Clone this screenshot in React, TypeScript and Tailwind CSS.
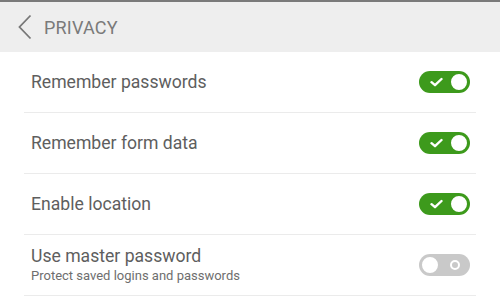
import { useState } from 'react'

type Item = { title: string; subtitle?: string; on: boolean }

const initial: Item[] = [
    { title: 'Remember passwords', on: true },
    { title: 'Remember form data', on: true },
    { title: 'Enable location', on: true },
    { title: 'Use master password', subtitle: 'Protect saved logins and passwords', on: false },
]

const Toggle = ({ on, onClick }: { on: boolean; onClick: () => void }) => (
    <button
        onClick={onClick}
        className={`relative flex h-[22px] w-[51px] items-center rounded-full ${on ? 'bg-[#3d9a1c]' : 'bg-[#c9c9c9]'}`}
    >
        {on ? (
            <>
                <svg className="absolute left-[11px] top-[6px]" width="13" height="10" viewBox="0 0 13 10">
                    <path d="M1.5 5.2 L5 8.2 L11.5 2" fill="none" stroke="#fff" strokeWidth="2.4" strokeLinecap="round" strokeLinejoin="round" />
                </svg>
                <span className="absolute right-[1px] top-[1px] h-[20px] w-[20px] rounded-full border-2 border-[#3d9a1c] bg-white" />
            </>
        ) : (
            <>
                <span className="absolute left-[1px] top-[1px] h-[20px] w-[20px] rounded-full border-2 border-[#c9c9c9] bg-white" />
                <span className="absolute right-[10px] top-[6px] h-[10px] w-[10px] rounded-full border-[2.5px] border-white" />
            </>
        )}
    </button>
)

export default function App() {
    const [items, setItems] = useState(initial)

    const flip = (i: number) =>
        setItems(items.map((it, j) => (j === i ? { ...it, on: !it.on } : it)))

    return (
        <div className="h-[301px] w-[500px] overflow-hidden bg-white" style={{ fontFamily: 'Roboto, "Noto Sans", sans-serif' }}>
            <div className="h-[2px] bg-[#7a7a7a]" />
            <div className="flex h-[50px] items-center bg-[#eeeeee] pl-[17px]">
                <svg width="16" height="26" viewBox="0 0 16 26">
                    <path d="M13.5 1.5 L2.5 13 L13.5 24.5" fill="none" stroke="#777" strokeWidth="1.8" strokeLinejoin="miter" />
                </svg>
                <span className="ml-[11px] text-[18px] tracking-[0.2px] text-[#7a7a7a]">PRIVACY</span>
            </div>
            <div className="px-6">
                {items.map((it, i) => (
                    <div key={it.title} className="flex h-[61px] items-center justify-between border-b border-[#ebebeb] pl-[7px] pr-[6px]">
                        <div className="flex flex-col">
                            <span className="text-[17.6px] leading-[22px] text-[#5e5e5e]">{it.title}</span>
                            {it.subtitle && (
                                <span className="text-[13px] leading-[18px] text-[#6e6e6e]">{it.subtitle}</span>
                            )}
                        </div>
                        <Toggle on={it.on} onClick={() => flip(i)} />
                    </div>
                ))}
            </div>
        </div>
    )
}
